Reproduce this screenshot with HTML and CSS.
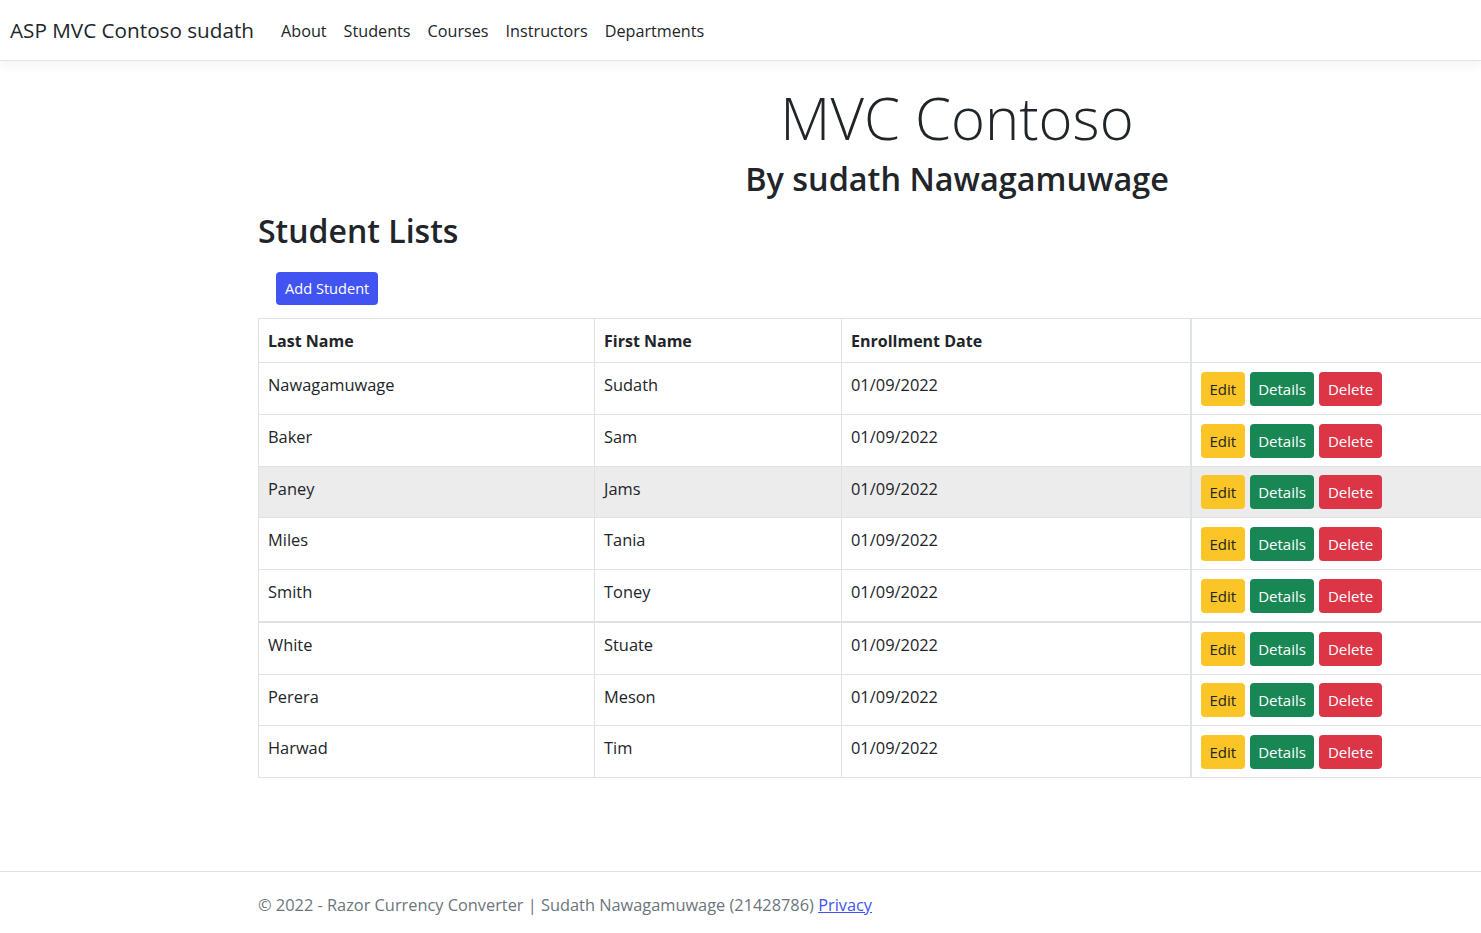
FILE: index.html
```html
<!DOCTYPE html>
<html lang="en">
<head>
<meta charset="utf-8">
<title>Student Lists - ASP MVC Contoso sudath</title>
<link rel="stylesheet" href="styles.css">
</head>
<body>
<header class="navbar">
  <a class="brand" href="#">ASP MVC Contoso sudath</a>
  <nav class="nav-links">
    <a href="#">About</a>
    <a href="#">Students</a>
    <a href="#">Courses</a>
    <a href="#">Instructors</a>
    <a href="#">Departments</a>
  </nav>
</header>

<main class="container">
  <div class="hero">
    <h1 class="display">MVC Contoso</h1>
    <h2 class="byline">By sudath Nawagamuwage</h2>
  </div>

  <h1 class="page-title">Student Lists</h1>
  <div class="toolbar"><a class="btn btn-primary" href="#">Add Student</a></div>

  <table class="table">
    <thead>
      <tr><th class="c1">Last Name</th><th class="c2">First Name</th><th class="c3">Enrollment Date</th><th class="c4"></th></tr>
    </thead>
    <tbody>
      <tr><td>Nawagamuwage</td><td>Sudath</td><td>01/09/2022</td><td class="actions"><div class="btns"><a class="btn btn-warning" href="#">Edit</a><a class="btn btn-success" href="#">Details</a><a class="btn btn-danger" href="#">Delete</a></div></td></tr>
      <tr><td>Baker</td><td>Sam</td><td>01/09/2022</td><td class="actions"><div class="btns"><a class="btn btn-warning" href="#">Edit</a><a class="btn btn-success" href="#">Details</a><a class="btn btn-danger" href="#">Delete</a></div></td></tr>
      <tr class="hover"><td>Paney</td><td>Jams</td><td>01/09/2022</td><td class="actions"><div class="btns"><a class="btn btn-warning" href="#">Edit</a><a class="btn btn-success" href="#">Details</a><a class="btn btn-danger" href="#">Delete</a></div></td></tr>
      <tr><td>Miles</td><td>Tania</td><td>01/09/2022</td><td class="actions"><div class="btns"><a class="btn btn-warning" href="#">Edit</a><a class="btn btn-success" href="#">Details</a><a class="btn btn-danger" href="#">Delete</a></div></td></tr>
      <tr><td>Smith</td><td>Toney</td><td>01/09/2022</td><td class="actions"><div class="btns"><a class="btn btn-warning" href="#">Edit</a><a class="btn btn-success" href="#">Details</a><a class="btn btn-danger" href="#">Delete</a></div></td></tr>
      <tr class="thick"><td>White</td><td>Stuate</td><td>01/09/2022</td><td class="actions"><div class="btns"><a class="btn btn-warning" href="#">Edit</a><a class="btn btn-success" href="#">Details</a><a class="btn btn-danger" href="#">Delete</a></div></td></tr>
      <tr><td>Perera</td><td>Meson</td><td>01/09/2022</td><td class="actions"><div class="btns"><a class="btn btn-warning" href="#">Edit</a><a class="btn btn-success" href="#">Details</a><a class="btn btn-danger" href="#">Delete</a></div></td></tr>
      <tr><td>Harwad</td><td>Tim</td><td>01/09/2022</td><td class="actions"><div class="btns"><a class="btn btn-warning" href="#">Edit</a><a class="btn btn-success" href="#">Details</a><a class="btn btn-danger" href="#">Delete</a></div></td></tr>
    </tbody>
  </table>
</main>

<footer class="footer">
  <div class="footer-inner">© 2022 - Razor Currency Converter | Sudath Nawagamuwage (21428786) <a href="#">Privacy</a></div>
</footer>
</body>
</html>
```

FILE: styles.css
```css
html, body {
  margin: 0;
  padding: 0;
  overflow-x: hidden;
}
body {
  font-family: "Open Sans", "Noto Sans", sans-serif;
  font-size: 16px;
  line-height: 1.5;
  color: #212529;
  background: #fff;
  width: 1481px;
}
a { text-decoration: none; }

.navbar {
  height: 61px;
  box-sizing: border-box;
  border-bottom: 1px solid #e3e3e3;
  box-shadow: 0 4px 12px rgba(0,0,0,0.05);
  display: flex;
  align-items: center;
  padding: 2px 10px 0;
}
.brand {
  font-size: 20.7px;
  color: #212529;
  margin-right: 18.5px;
}
.nav-links {
  display: flex;
}
.nav-links a {
  color: #212529;
  padding: 8px 8.5px;
  font-size: 16.2px;
}

.container {
  margin-left: 258px;
  width: 1398px;
}
.hero {
  text-align: center;
  padding-top: 22px;
}
.display {
  font-size: 58px;
  font-weight: 300;
  line-height: 1.2;
  margin: 0;
}
.byline {
  font-size: 32.4px;
  font-weight: 600;
  line-height: 1.2;
  margin: 6px 0 0;
}
.page-title {
  font-size: 32px;
  font-weight: 600;
  line-height: 1.2;
  margin: 14.5px 0 0;
}
.toolbar {
  display: flex;
  padding: 21.7px 0 13px 18px;
}
.btn {
  display: inline-block;
  font-size: 15px;
  line-height: 24px;
  padding: 5px 8.5px;
  border-radius: 4px;
  color: #fff;
}
.btn-primary { background: #4154f1; padding: 5px 9px; font-size: 14.6px; line-height: 23px; }
.btn-warning { background: #fbc527; color: #212529; }
.btn-success { background: #198754; }
.btn-danger { background: #dc3545; }

.table {
  width: 1398px;
  border-collapse: collapse;
  border: 1px solid #dee2e6;
  font-size: 16.4px;
}
.table th, .table td {
  border: 1px solid #dee2e6;
  padding: 10px 9px 8px;
  text-align: left;
  vertical-align: top;
}
.table th {
  font-weight: 700;
  padding-top: 10px;
  padding-bottom: 9px;
  font-size: 16px;
}
.c1 { width: 317px; }
.c2 { width: 228px; }
.c3 { width: 330px; }
.table td.actions {
  border-left: 2px solid #dee2e6;
  padding: 8.75px 9px 8px 9px;
}
.table th.c4 { border-left: 2px solid #dee2e6; }
.btns {
  display: flex;
  gap: 5px;
}
.table tr.hover td { background: #ececec; }
.table tr.thick td { border-top: 2px solid #dee2e6; }

.footer {
  margin-top: 93px;
  border-top: 1px solid #dee2e6;
  color: #6c757d;
}
.footer-inner {
  padding: 21px 0 20px 258px;
  font-size: 16.35px;
}
.footer a {
  color: #4154f1;
  text-decoration: underline;
}
```
